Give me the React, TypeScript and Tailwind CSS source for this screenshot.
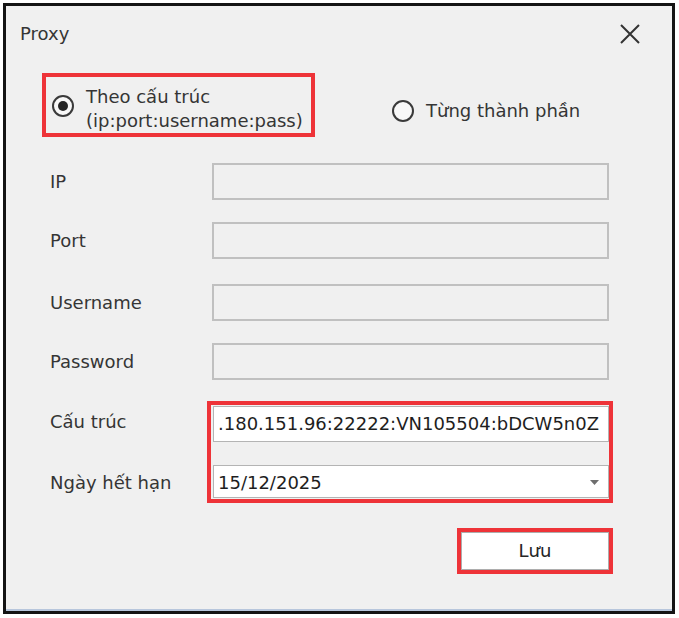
import React from 'react';

const Radio: React.FC<{ checked?: boolean }> = ({ checked }) => (
    <span className="flex h-[22px] w-[22px] shrink-0 items-center justify-center rounded-full border-2 border-[#3a3a3a] bg-[#f8f8f8]">
        {checked && <span className="h-[10px] w-[10px] rounded-full bg-[#262626]" />}
    </span>
);

const rows = [
    { label: 'IP', mt: 'mt-[26px]' },
    { label: 'Port', mt: 'mt-[22px]' },
    { label: 'Username', mt: 'mt-[25px]' },
    { label: 'Password', mt: 'mt-[22px]' },
];

export default function App() {
    return (
        <div className="h-[618px] w-[679px] bg-white p-[3px] font-['DejaVu_Sans',sans-serif] text-[18px] leading-[24px] text-[#353535]">
            <div className="flex h-[611px] w-[672px] flex-col border-[3px] border-[#141414] bg-[#f0f0f0] shadow-[inset_0_-2px_0_#b7c6dc]">
                {/* title bar */}
                <div className="flex h-[56px] shrink-0 items-center justify-between pl-[14px] pr-[32px]">
                    <span>Proxy</span>
                    <svg width="20" height="20" viewBox="0 0 20 20" fill="none" stroke="#333" strokeWidth="2">
                        <path d="M1 1 L19 19 M19 1 L1 19" />
                    </svg>
                </div>

                {/* mode radios */}
                <div className="mt-[11px] flex items-start pl-[36px]">
                    <div className="flex h-[64px] w-[273px] items-start border-4 border-[#ee3338] pl-[6px]">
                        <span className="mt-[18px]">
                            <Radio checked />
                        </span>
                        <div className="ml-[12px] mt-[8px] flex flex-col whitespace-nowrap">
                            <span>Theo cấu trúc</span>
                            <span>(ip:port:username:pass)</span>
                        </div>
                    </div>
                    <div className="ml-[77px] mt-[26px] flex items-center gap-[12px] whitespace-nowrap">
                        <Radio />
                        <span>Từng thành phần</span>
                    </div>
                </div>

                {/* form */}
                <div className="ml-[44px] flex w-[563px] flex-col">
                    {rows.map((r) => (
                        <div key={r.label} className={`flex items-center ${r.mt}`}>
                            <span className="w-[162px]">{r.label}</span>
                            <div className="h-[37px] w-[397px] border-2 border-[#c0c0c0] bg-[#f0f0f0]" />
                        </div>
                    ))}

                    <div className="mt-[21px] flex">
                        <div className="flex w-[157px] flex-col">
                            <span className="mt-[9px]">Cấu trúc</span>
                            <span className="mt-[37px] whitespace-nowrap">Ngày hết hạn</span>
                        </div>
                        <div className="flex w-[406px] flex-col border-4 border-[#ee3338] py-[1px] pl-[2px]">
                            <div className="flex h-[36px] items-center overflow-hidden whitespace-nowrap border border-[#b4b4b4] bg-white pl-[4px] text-[#1e1e1e]">
                                .180.151.96:22222:VN105504:bDCW5n0Z
                            </div>
                            <div className="mt-[23px] flex h-[33px] items-center justify-between border border-[#b4b4b4] bg-white pl-[4px] pr-[9px] pt-[2px] text-[#1e1e1e]">
                                <span>15/12/2025</span>
                                <svg width="9" height="5" viewBox="0 0 9 5">
                                    <path d="M0 0 L9 0 L4.5 5 Z" fill="#6e6e6e" />
                                </svg>
                            </div>
                        </div>
                    </div>

                    <div className="mt-[25px] flex justify-end">
                        <div className="border-4 border-[#ee3338]">
                            <button className="flex h-[38px] w-[148px] items-center justify-center border border-[#adadad] bg-white text-[#262626]">
                                Lưu
                            </button>
                        </div>
                    </div>
                </div>
            </div>
        </div>
    );
}
